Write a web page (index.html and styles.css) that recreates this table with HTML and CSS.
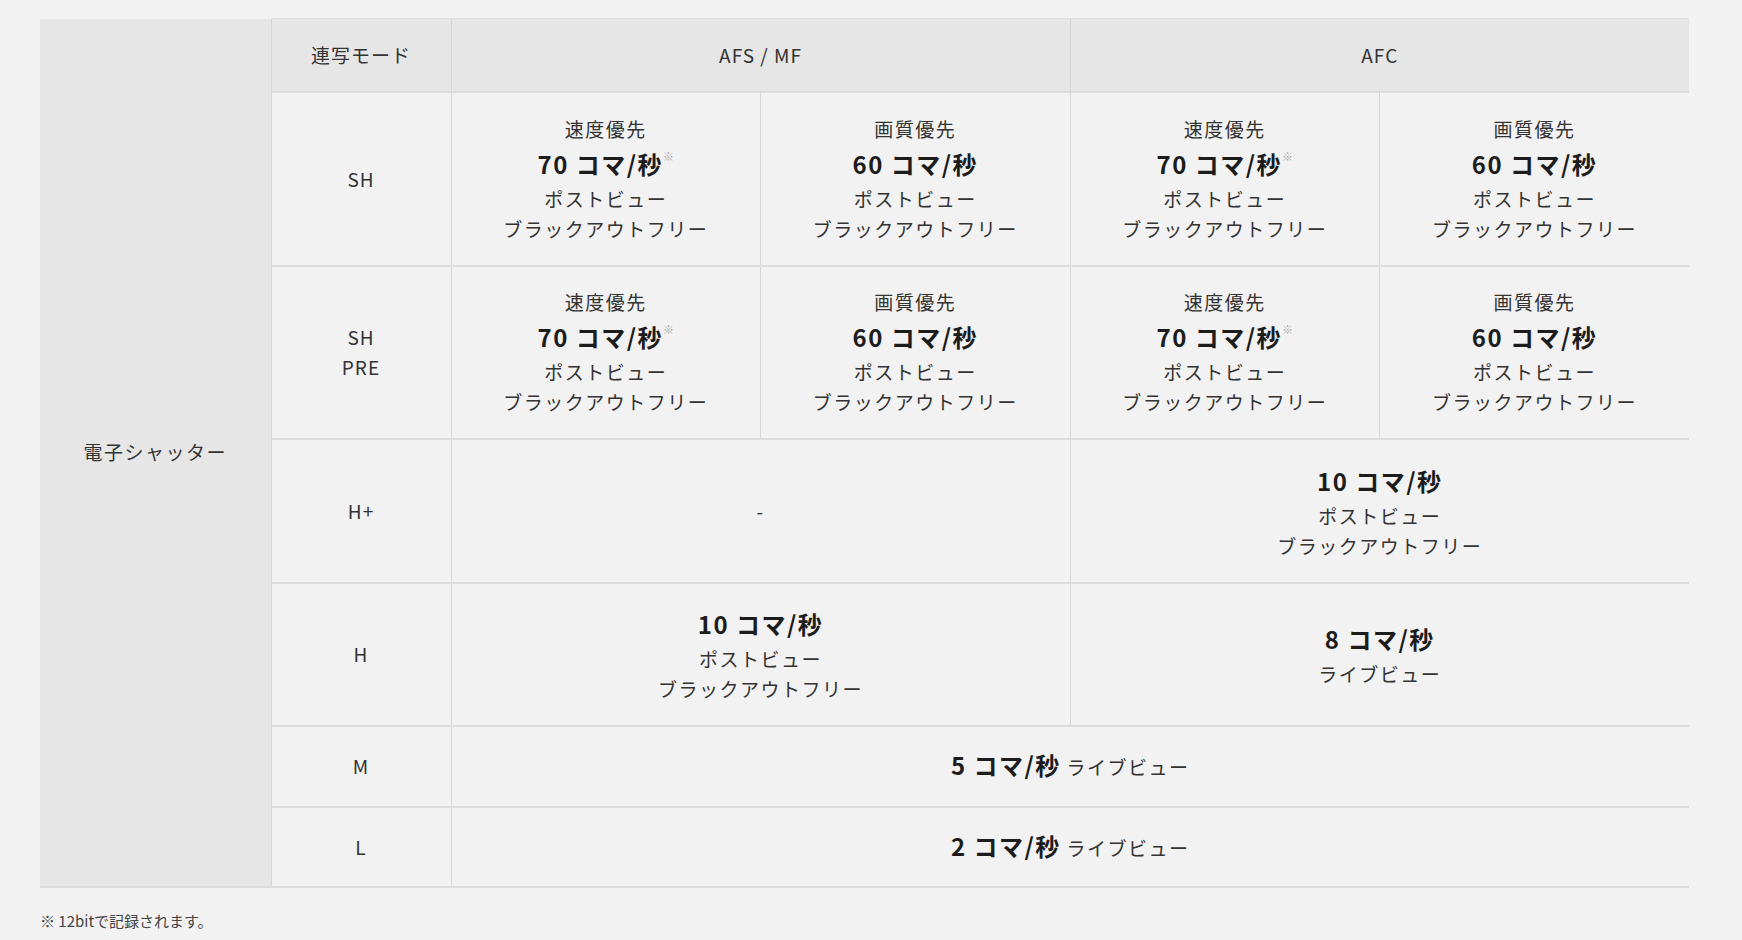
FILE: index.html
```html
<!DOCTYPE html>
<html lang="ja">
<head>
<meta charset="utf-8">
<title>連写モード</title>
<link rel="stylesheet" href="styles.css">
</head>
<body>
<div class="page">
  <table class="spec">
    <colgroup>
      <col class="c-type">
      <col class="c-mode">
      <col class="c-val">
      <col class="c-val">
      <col class="c-val">
      <col class="c-val">
    </colgroup>
    <tbody>
      <tr class="r-head">
        <th class="type" rowspan="7">電子シャッター</th>
        <th class="head">連写モード</th>
        <th class="head" colspan="2">AFS / MF</th>
        <th class="head" colspan="2">AFC</th>
      </tr>
      <tr>
        <td class="mode">SH</td>
        <td><span class="ln">速度優先</span><span class="big">70 コマ/秒<sup>※</sup></span><span class="ln">ポストビュー</span><span class="ln">ブラックアウトフリー</span></td>
        <td><span class="ln">画質優先</span><span class="big">60 コマ/秒</span><span class="ln">ポストビュー</span><span class="ln">ブラックアウトフリー</span></td>
        <td><span class="ln">速度優先</span><span class="big">70 コマ/秒<sup>※</sup></span><span class="ln">ポストビュー</span><span class="ln">ブラックアウトフリー</span></td>
        <td><span class="ln">画質優先</span><span class="big">60 コマ/秒</span><span class="ln">ポストビュー</span><span class="ln">ブラックアウトフリー</span></td>
      </tr>
      <tr>
        <td class="mode"><span class="ln">SH</span><span class="ln">PRE</span></td>
        <td><span class="ln">速度優先</span><span class="big">70 コマ/秒<sup>※</sup></span><span class="ln">ポストビュー</span><span class="ln">ブラックアウトフリー</span></td>
        <td><span class="ln">画質優先</span><span class="big">60 コマ/秒</span><span class="ln">ポストビュー</span><span class="ln">ブラックアウトフリー</span></td>
        <td><span class="ln">速度優先</span><span class="big">70 コマ/秒<sup>※</sup></span><span class="ln">ポストビュー</span><span class="ln">ブラックアウトフリー</span></td>
        <td><span class="ln">画質優先</span><span class="big">60 コマ/秒</span><span class="ln">ポストビュー</span><span class="ln">ブラックアウトフリー</span></td>
      </tr>
      <tr>
        <td class="mode">H+</td>
        <td colspan="2">-</td>
        <td colspan="2"><span class="big">10 コマ/秒</span><span class="ln">ポストビュー</span><span class="ln">ブラックアウトフリー</span></td>
      </tr>
      <tr>
        <td class="mode">H</td>
        <td colspan="2"><span class="big">10 コマ/秒</span><span class="ln">ポストビュー</span><span class="ln">ブラックアウトフリー</span></td>
        <td colspan="2"><span class="big">8 コマ/秒</span><span class="ln">ライブビュー</span></td>
      </tr>
      <tr>
        <td class="mode">M</td>
        <td colspan="4" class="inline"><b>5 コマ/秒</b> ライブビュー</td>
      </tr>
      <tr>
        <td class="mode">L</td>
        <td colspan="4" class="inline"><b>2 コマ/秒</b> ライブビュー</td>
      </tr>
    </tbody>
  </table>
  <p class="note">※ 12bitで記録されます。</p>
</div>
</body>
</html>
```
FILE: styles.css
```css
html, body {
  margin: 0;
  padding: 0;
  background: #f2f2f2;
}
body {
  font-family: "Noto Sans CJK JP", "Noto Sans", sans-serif;
  color: #333;
}
.page {
  padding: 18px 53px 0 40px;
}
.spec {
  width: 1649px;
  border-collapse: collapse;
  table-layout: fixed;
}
.c-type { width: 231px; }
.c-mode { width: 180px; }
.c-val { width: 309.5px; }
.spec th, .spec td {
  padding: 20.75px 8px;
  text-align: center;
  vertical-align: middle;
  font-size: 19px;
  line-height: 30px;
  letter-spacing: 1.5px;
  font-weight: 400;
  color: #333;
  border-left: 1px solid #d6d6d6;
  border-top: 2px solid #dcdcdc;
  border-bottom: 2px solid #dcdcdc;
}
.spec .type {
  background: #e6e6e6;
  border-left: none;
  border-top: none;
}
.spec .head {
  background: #e6e6e6;
  border-top: 1px solid #e0e0e0;
  padding-top: 21px;
  padding-bottom: 21px;
  letter-spacing: 1px;
}
.spec .mode {
  letter-spacing: 1px;
}
.ln {
  display: block;
}
.big {
  display: block;
  font-size: 24px;
  line-height: 40px;
  font-weight: 700;
  letter-spacing: 1.5px;
  color: #1c1c1c;
}
.big sup {
  font-size: 11px;
  font-weight: 400;
  color: #aaa;
  vertical-align: top;
  line-height: 24px;
  letter-spacing: 0;
}
.spec .inline {
  line-height: 40px;
  padding-top: 18px;
  padding-bottom: 18.5px;
}
.inline b {
  font-size: 24px;
  font-weight: 700;
  letter-spacing: 1.5px;
  color: #1c1c1c;
}
.note {
  margin: 22px 0 0;
  font-size: 15px;
  line-height: 22px;
  color: #444;
}
```
